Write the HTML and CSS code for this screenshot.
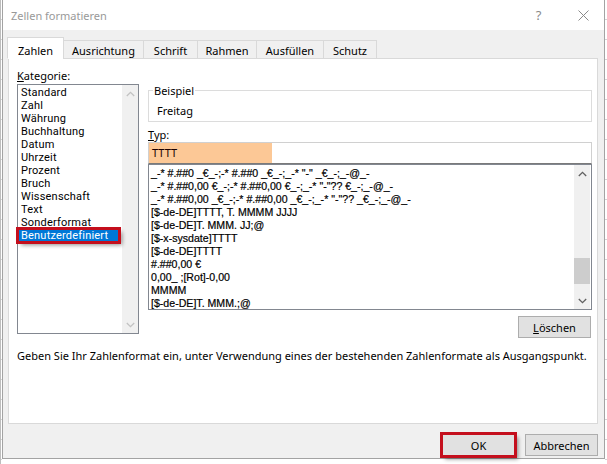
FILE: index.html
```html
<!DOCTYPE html>
<html lang="de">
<head>
<meta charset="utf-8">
<title>Zellen formatieren</title>
<link rel="stylesheet" href="styles.css">
</head>
<body>
<div class="desk">
  <div class="sheet sheet-left"></div>
  <div class="dialog">
    <div class="titlebar">
      <span class="title">Zellen formatieren</span>
      <span class="capbtn help">?</span>
      <span class="capbtn close"><svg width="11" height="11" viewBox="0 0 11 11"><path d="M0.5 0.5 L10.5 10.5 M10.5 0.5 L0.5 10.5" stroke="#8a8a8a" stroke-width="1" fill="none"/></svg></span>
    </div>
    <div class="client">
      <div class="tabs">
        <div class="tab active w-zahlen">Zahlen</div>
        <div class="tab w-ausr">Ausrichtung</div>
        <div class="tab w-schrift">Schrift</div>
        <div class="tab w-rahmen">Rahmen</div>
        <div class="tab w-ausf">Ausfüllen</div>
        <div class="tab w-schutz">Schutz</div>
      </div>
      <div class="panel">
        <div class="columns">
          <div class="cat">
            <div class="lbl"><u>K</u>ategorie:</div>
            <div class="listbox cat-list">
              <div class="cat-items">
                <div class="item">Standard</div>
                <div class="item">Zahl</div>
                <div class="item">Währung</div>
                <div class="item">Buchhaltung</div>
                <div class="item">Datum</div>
                <div class="item">Uhrzeit</div>
                <div class="item">Prozent</div>
                <div class="item">Bruch</div>
                <div class="item">Wissenschaft</div>
                <div class="item">Text</div>
                <div class="item">Sonderformat</div>
                <div class="item selected">Benutzerdefiniert</div>
              </div>
              <div class="vscroll disabled">
                <span class="arrow"><svg width="9" height="6" viewBox="0 0 9 6"><polyline points="0.8,5 4.5,1.3 8.2,5" fill="none" stroke="currentColor" stroke-width="1.3"/></svg></span>
                <span class="track"></span>
                <span class="arrow"><svg width="9" height="6" viewBox="0 0 9 6"><polyline points="0.8,1 4.5,4.7 8.2,1" fill="none" stroke="currentColor" stroke-width="1.3"/></svg></span>
              </div>
            </div>
          </div>
          <div class="right">
            <fieldset class="sample">
              <legend>Beispiel</legend>
              <div class="sample-val">Freitag</div>
            </fieldset>
            <div class="lbl typ-lbl"><u>T</u>yp:</div>
            <div class="typ-input"><span class="sel">TTTT</span></div>
            <div class="listbox fmt-list">
              <div class="fmt-items">
                <div class="fmt">_-* #.##0 _€_-;-* #.##0 _€_-;_-* "-" _€_-;_-@_-</div>
                <div class="fmt">_-* #.##0,00 €_-;-* #.##0,00 €_-;_-* "-"?? €_-;_-@_-</div>
                <div class="fmt">_-* #.##0,00 _€_-;-* #.##0,00 _€_-;_-* "-"?? _€_-;_-@_-</div>
                <div class="fmt">[$-de-DE]TTTT, T. MMMM JJJJ</div>
                <div class="fmt">[$-de-DE]T. MMM. JJ;@</div>
                <div class="fmt">[$-x-sysdate]TTTT</div>
                <div class="fmt">[$-de-DE]TTTT</div>
                <div class="fmt">#.##0,00 €</div>
                <div class="fmt">0,00_ ;[Rot]-0,00</div>
                <div class="fmt">MMMM</div>
                <div class="fmt">[$-de-DE]T. MMM.;@</div>
              </div>
              <div class="vscroll active-sb">
                <span class="arrow"><svg width="9" height="6" viewBox="0 0 9 6"><polyline points="0.8,5 4.5,1.3 8.2,5" fill="none" stroke="currentColor" stroke-width="1.3"/></svg></span>
                <span class="track"><span class="thumb"></span></span>
                <span class="arrow"><svg width="9" height="6" viewBox="0 0 9 6"><polyline points="0.8,1 4.5,4.7 8.2,1" fill="none" stroke="currentColor" stroke-width="1.3"/></svg></span>
              </div>
            </div>
            <div class="btnrow">
              <button class="btn loeschen"><u>L</u>öschen</button>
            </div>
          </div>
        </div>
        <div class="desc">Geben Sie Ihr Zahlenformat ein, unter Verwendung eines der bestehenden Zahlenformate als Ausgangspunkt.</div>
      </div>
      <div class="footer">
        <button class="btn ok">OK</button>
        <button class="btn">Abbrechen</button>
      </div>
    </div>
  </div>
  <div class="sheet sheet-right"></div>
</div>
</body>
</html>
```
FILE: styles.css
```css
* { box-sizing: border-box; }

body {
  margin: 0;
  width: 607px;
  height: 464px;
  overflow: hidden;
  background: #ffffff;
  font-family: "Noto Sans", "Open Sans", sans-serif;
  font-size: 11px;
  color: #000;
}

.desk {
  display: flex;
  height: 464px;
}

.sheet {
  background: repeating-linear-gradient(to bottom, #ffffff 0 19px, #d4d4d4 19px 20px);
}
.sheet-left { width: 2px; border-left: 1px solid #bdbdbd; }
.sheet-right { width: 2px; }

.dialog {
  width: 603px;
  height: 459px;
  flex: none;
  border: 1px solid #a3a3a3;
  border-top: none;
  display: flex;
  flex-direction: column;
  background: #f0f0f0;
}

/* title bar */
.titlebar {
  height: 30px;
  flex: none;
  background: #ffffff;
  display: flex;
  align-items: center;
}
.title {
  flex: 1;
  padding-left: 8px;
  color: #999999;
  line-height: 15px;
}
.capbtn {
  width: 45px;
  height: 30px;
  display: flex;
  align-items: center;
  justify-content: center;
  color: #8a8a8a;
  font-size: 13px;
}
.close { margin-right: -2px; }

/* client */
.client {
  flex: 1;
  display: flex;
  flex-direction: column;
  padding: 7px 6px 0 5px;
}

.tabs {
  display: flex;
  align-items: flex-end;
  height: 22px;
  margin-left: -1px;
  position: relative;
  z-index: 1;
}
.tab {
  height: 19px;
  border: 1px solid #d9d9d9;
  background: #f0f0f0;
  text-align: center;
  line-height: 15px;
  padding-top: 2px;
  margin-left: -1px;
}
.tab:first-child { margin-left: 0; }
.tab.active {
  height: 22px;
  background: #ffffff;
  border-bottom: 1px solid #ffffff;
  padding-top: 5px;
}
.w-zahlen { width: 57px; }
.w-ausr { width: 81px; }
.w-schrift { width: 55px; }
.w-rahmen { width: 60px; }
.w-ausf { width: 68px; }
.w-schutz { width: 54px; }

.panel {
  height: 366px;
  margin-top: -1px;
  background: #ffffff;
  border: 1px solid #d9d9d9;
  padding: 9px 5px 0 8px;
  display: flex;
  flex-direction: column;
}

.columns {
  display: grid;
  grid-template-columns: 122px 444px;
  column-gap: 9px;
}

.lbl {
  line-height: 15px;
  height: 15px;
  white-space: nowrap;
}
.cat .lbl { margin-bottom: 1px; }

.listbox {
  display: flex;
  border: 1px solid #828790;
  background: #ffffff;
}

.cat-list {
  height: 250px;
}
.cat-items {
  flex: 1;
  padding-top: 1px;
  font-family: Roboto, "Noto Sans", sans-serif;
  font-size: 11px;
}
.item {
  height: 13px;
  line-height: 13px;
  padding-left: 3px;
  margin-right: 3px;
  white-space: nowrap;
  letter-spacing: 0.2px;
}
.item.selected {
  background: #0078d7;
  color: #ffffff;
  outline: 3px solid #c40f1d;
  outline-offset: -1px;
  box-shadow: 3px 3px 4px rgba(0, 0, 0, 0.45);
  position: relative;
}

.vscroll {
  width: 16px;
  flex: none;
  background: #f0f0f0;
  display: flex;
  flex-direction: column;
}
.vscroll .arrow {
  height: 17px;
  flex: none;
  display: flex;
  align-items: center;
  justify-content: center;
}
.vscroll .track {
  flex: 1;
  display: flex;
  flex-direction: column;
}
.disabled { color: #c2c2c2; }
.active-sb {
  color: #606060;
  margin-right: 1px;
}
.thumb {
  display: block;
  height: 26px;
  margin-top: 76px;
  background: #cdcdcd;
}

.right {
  display: flex;
  flex-direction: column;
  padding-top: 15px;
}

.sample {
  margin: 0;
  height: 39px;
  border: 1px solid #dcdcdc;
  padding: 5px 8px 0 8px;
  min-width: 0;
}
.sample legend {
  padding: 0 1px;
  margin-left: -4px;
  line-height: 15px;
}
.sample-val {
  line-height: 15px;
}

.typ-lbl { margin-top: 5px; }

.typ-input {
  height: 22px;
  border: 1px solid #d0d0d0;
  border-bottom: 1px solid #7a7a7a;
  display: flex;
}
.sel {
  width: 123px;
  background: #fcc896;
  line-height: 20px;
  padding-left: 3px;
  color: #1a0000;
}

.fmt-list {
  height: 146px;
}
.fmt-items {
  flex: 1;
  padding-top: 2px;
  padding-left: 2px;
  font-family: "Liberation Sans", Arial, sans-serif;
  font-size: 10.6px;
  -webkit-text-stroke: 0.2px #000;
  overflow: hidden;
}
.fmt {
  height: 13px;
  line-height: 13px;
  white-space: pre;
}

.btnrow {
  display: flex;
  justify-content: flex-end;
  margin-top: 6px;
}

.btn {
  font-family: "Noto Sans", "Open Sans", sans-serif;
  font-size: 11px;
  color: #000;
  height: 22px;
  width: 73px;
  padding: 0;
  background: #e1e1e1;
  border: 1px solid #adadad;
  line-height: 15px;
}
.loeschen { margin-right: 1px; }

.desc {
  margin-top: 10px;
  line-height: 15px;
  white-space: nowrap;
}

.footer {
  display: flex;
  justify-content: flex-end;
  gap: 10px;
  padding-top: 10px;
}
.ok {
  border-color: #0078d7;
  outline: 3px solid #c40f1d;
  outline-offset: -1px;
  box-shadow: 3px 3px 4px rgba(0, 0, 0, 0.45);
}
```
